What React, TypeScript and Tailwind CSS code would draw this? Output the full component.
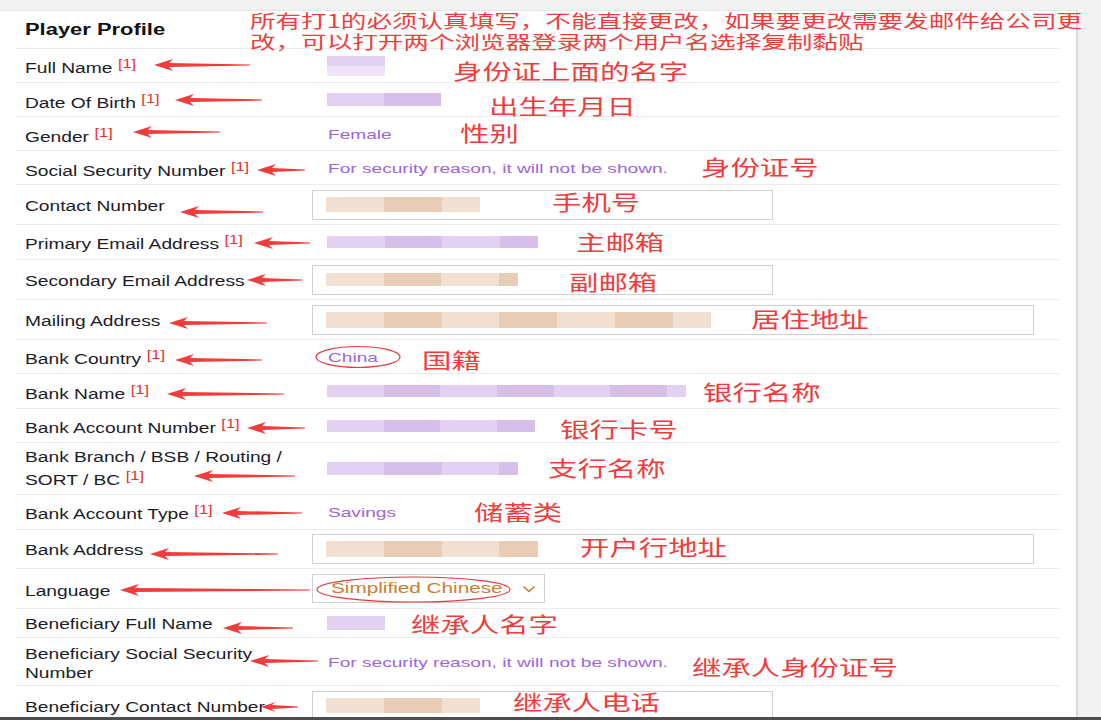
import type { ReactNode } from "react"

const purple = ["bg-[#e2d1f0]", "bg-[#dbc5ec]", "bg-[#e9dcf5]", "bg-[#d6bfe9]", "bg-[#efe5f8]", "bg-[#e0ccef]"]
const peach = ["bg-[#f2e1d2]", "bg-[#edd3bf]", "bg-[#f5e8dd]", "bg-[#e9ccb5]", "bg-[#f7ede5]", "bg-[#efd9c7]"]

// pixelated (mosaic) placeholder for the blurred personal data
function Pix({ size, n, rows = 1, tone }: { size: string; n: number; rows?: number; tone: "purple" | "peach" }) {
  const pal = tone === "purple" ? purple : peach
  return (
    <div className={`flex flex-col ${size}`}>
      {Array.from({ length: rows }).map((_, r) => (
        <div key={r} className="flex flex-1">
          {Array.from({ length: n }).map((_, i) => (
            <div key={i} className={`flex-1 ${pal[(i * 5 + r * 4 + (i % 3)) % pal.length]}`} />
          ))}
        </div>
      ))}
    </div>
  )
}

function Val({ children }: { children: ReactNode }) {
  return (
    <div className="pl-[16px]">
      <span className="inline-block origin-left scale-x-[1.47] whitespace-nowrap text-[13px] leading-[18px] text-[#a064dc]">
        {children}
      </span>
    </div>
  )
}

function Input({ w, children }: { w: string; children?: ReactNode }) {
  return <div className={`flex h-[30px] items-center border border-[#d0d0d0] pl-[13px] ${w}`}>{children}</div>
}

type Row = {
  lines: string[]
  req?: boolean
  h: string
  pt: string
  lead?: string
  value: ReactNode
}

const rows: Row[] = [
  { lines: ["Full Name"], req: true, h: "h-[34px]", pt: "pt-[10px]", value: <div className="pl-[15px]"><Pix size="w-[58px] h-[20px]" n={3} rows={2} tone="purple" /></div> },
  { lines: ["Date Of Birth"], req: true, h: "h-[34px]", pt: "pt-[11px]", value: <div className="pl-[15px]"><Pix size="w-[114px] h-[13px]" n={6} tone="purple" /></div> },
  { lines: ["Gender"], req: true, h: "h-[34px]", pt: "pt-[11px]", value: <Val>Female</Val> },
  { lines: ["Social Security Number"], req: true, h: "h-[34px]", pt: "pt-[11px]", value: <Val>For security reason, it will not be shown.</Val> },
  { lines: ["Contact Number"], h: "h-[40px]", pt: "pt-[12px]", value: <Input w="w-[461px]"><Pix size="w-[154px] h-[15px]" n={8} tone="peach" /></Input> },
  { lines: ["Primary Email Address"], req: true, h: "h-[35px]", pt: "pt-[10px]", value: <div className="pl-[15px]"><Pix size="w-[211px] h-[12px]" n={11} tone="purple" /></div> },
  { lines: ["Secondary Email Address"], h: "h-[40px]", pt: "pt-[12px]", value: <Input w="w-[461px]"><Pix size="w-[192px] h-[13px]" n={10} tone="peach" /></Input> },
  { lines: ["Mailing Address"], h: "h-[40px]", pt: "pt-[12px]", value: <Input w="w-[722px]"><Pix size="w-[385px] h-[16px]" n={20} tone="peach" /></Input> },
  { lines: ["Bank Country"], req: true, h: "h-[34px]", pt: "pt-[10px]", value: <Val>China</Val> },
  { lines: ["Bank Name"], req: true, h: "h-[35px]", pt: "pt-[11px]", value: <div className="pl-[15px]"><Pix size="w-[359px] h-[12px]" n={19} tone="purple" /></div> },
  { lines: ["Bank Account Number"], req: true, h: "h-[34px]", pt: "pt-[10px]", value: <div className="pl-[15px]"><Pix size="w-[208px] h-[12px]" n={11} tone="purple" /></div> },
  { lines: ["Bank Branch / BSB / Routing /", "SORT / BC"], req: true, h: "h-[52px]", pt: "pt-[3px]", lead: "leading-[23px]", value: <div className="pl-[15px]"><Pix size="w-[191px] h-[13px]" n={10} tone="purple" /></div> },
  { lines: ["Bank Account Type"], req: true, h: "h-[35px]", pt: "pt-[10px]", value: <Val>Savings</Val> },
  { lines: ["Bank Address"], h: "h-[39px]", pt: "pt-[11px]", value: <Input w="w-[722px]"><Pix size="w-[212px] h-[16px]" n={11} tone="peach" /></Input> },
  {
    lines: ["Language"],
    h: "h-[40px]",
    pt: "pt-[13px]",
    value: (
      <div className="flex h-[29px] w-[233px] items-center border border-[#d0d0d0] pl-[18px]">
        <span className="inline-block origin-left scale-x-[1.48] whitespace-nowrap text-[14px] text-[#c8802e]">Simplified Chinese</span>
        <svg className="ml-auto mr-[8px]" width="14" height="8" viewBox="0 0 14 8">
          <path d="M1.5 1.5 L7 6.5 L12.5 1.5" fill="none" stroke="#c8782a" strokeWidth="1.6" />
        </svg>
      </div>
    ),
  },
  { lines: ["Beneficiary Full Name"], h: "h-[29px]", pt: "pt-[6px]", value: <div className="pl-[15px]"><Pix size="w-[58px] h-[14px]" n={3} tone="purple" /></div> },
  { lines: ["Beneficiary Social Security", "Number"], h: "h-[48px]", pt: "pt-[7px]", lead: "leading-[19px]", value: <Val>For security reason, it will not be shown.</Val> },
  { lines: ["Beneficiary Contact Number"], h: "h-[40px]", pt: "pt-[12px]", value: <Input w="w-[461px]"><Pix size="w-[154px] h-[15px]" n={8} tone="peach" /></Input> },
]

// [tip x, tail x, y] in page coordinates
const arrows: [number, number, number][] = [
  [154, 250, 65], [175, 262, 100], [133, 220, 132], [257, 305, 170], [180, 263, 212], [254, 310, 243],
  [247, 302, 280], [169, 267, 323], [175, 262, 360], [167, 284, 394], [247, 305, 428], [194, 295, 476],
  [222, 302, 513], [150, 278, 554], [120, 310, 590], [223, 293, 628], [250, 318, 661], [261, 298, 707],
]

function arrowPath(tip: number, tail: number, y: number) {
  const hl = Math.min(19, (tail - tip) * 0.4)
  const hw = hl > 16 ? 6 : 5
  return `M${tip} ${y} L${tip + hl} ${y - hw} L${tip + hl - 4} ${y - 2} L${tail} ${y - 0.6} L${tail} ${y + 0.6} L${tip + hl - 4} ${y + 2} L${tip + hl} ${y + hw} Z`
}

const notes = [
  { t: "身份证上面的名字", c: "left-[453px] top-[57px]" },
  { t: "出生年月日", c: "left-[489px] top-[92px]" },
  { t: "性别", c: "left-[460px] top-[119px]" },
  { t: "身份证号", c: "left-[701px] top-[153px]" },
  { t: "手机号", c: "left-[552px] top-[188px]" },
  { t: "主邮箱", c: "left-[576px] top-[228px]" },
  { t: "副邮箱", c: "left-[569px] top-[268px]" },
  { t: "居住地址", c: "left-[751px] top-[305px]" },
  { t: "国籍", c: "left-[422px] top-[346px]" },
  { t: "银行名称", c: "left-[703px] top-[378px]" },
  { t: "银行卡号", c: "left-[560px] top-[415px]" },
  { t: "支行名称", c: "left-[548px] top-[454px]" },
  { t: "储蓄类", c: "left-[474px] top-[498px]" },
  { t: "开户行地址", c: "left-[580px] top-[533px]" },
  { t: "继承人名字", c: "left-[411px] top-[610px]" },
  { t: "继承人身份证号", c: "left-[692px] top-[653px]" },
  { t: "继承人电话", c: "left-[513px] top-[688px]" },
]

export default function App() {
  return (
    <div className="relative flex h-[720px] w-[1101px] flex-col overflow-hidden bg-[#f2f2f2] font-['Liberation_Sans',Arial,sans-serif]">
      <div className="flex min-h-0 flex-1 pt-[10px]">
        <div className="w-[1078px] overflow-hidden border-r-2 border-t border-[#dadada] border-t-[#e6e6e6] bg-white px-[16px]">
          <div className="flex h-[38px] items-center border-b border-[#ececec] pl-[9px]">
            <span className="inline-block origin-left scale-x-[1.37] text-[16px] font-bold text-[#111]">Player Profile</span>
          </div>
          {rows.map((r, i) => (
            <div key={i} className={`flex border-b border-[#ececec] ${r.h}`}>
              <div className={`w-[296px] shrink-0 pl-[9px] text-[14px] leading-[18px] ${r.pt}`}>
                <span className={`inline-block origin-left scale-x-[1.37] whitespace-nowrap text-[#1c1c28] ${r.lead ?? "leading-[18px]"}`}>
                  {r.lines.map((l, j) => (
                    <span key={j}>
                      {j > 0 && <br />}
                      {l}
                    </span>
                  ))}
                  {r.req && <sup className="top-[-5px] ml-[4px] text-[12px] text-[#e8302f]">[1]</sup>}
                </span>
              </div>
              <div className="flex flex-1 items-center">{r.value}</div>
            </div>
          ))}
        </div>
      </div>
      <div className="h-[3px] shrink-0 bg-[#4e4e4e]" />

      <svg className="pointer-events-none absolute left-0 top-0" width="1101" height="720" viewBox="0 0 1101 720">
        {arrows.map(([a, b, y], i) => (
          <path key={i} d={arrowPath(a, b, y)} fill="#f23c3c" />
        ))}
        <ellipse cx="358" cy="357" rx="42" ry="10.5" fill="none" stroke="#e8383d" strokeWidth="1.2" />
        <ellipse cx="413.5" cy="589.5" rx="96.5" ry="12.5" fill="none" stroke="#e8383d" strokeWidth="1.2" />
      </svg>

      <div className="pointer-events-none absolute left-[250px] top-[10px] font-['Noto_Sans_CJK_SC',sans-serif] text-[18px] leading-[21px] text-[#f23c3c]">
        <span className="inline-block origin-left scale-x-[1.42] whitespace-nowrap">
          所有打1的必须认真填写，不能直接更改，如果要更改需要发邮件给公司更
          <br />
          改，可以打开两个浏览器登录两个用户名选择复制黏贴
        </span>
      </div>
      {notes.map((n, i) => (
        <span
          key={i}
          className={`pointer-events-none absolute inline-block origin-left scale-x-[1.4] whitespace-nowrap font-['Noto_Sans_CJK_SC',sans-serif] text-[21px] leading-[26px] text-[#f23c3c] ${n.c}`}
        >
          {n.t}
        </span>
      ))}
    </div>
  )
}
